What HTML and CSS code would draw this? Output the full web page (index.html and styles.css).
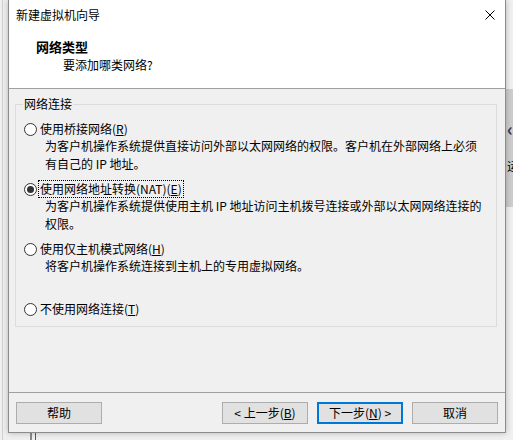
FILE: index.html
```html
<!DOCTYPE html>
<html lang="zh-CN">
<head>
    <meta charset="UTF-8">
    <meta name="viewport" content="width=device-width, initial-scale=1.0">
    <title>新建虚拟机向导</title>
    <link rel="stylesheet" href="styles.css">
</head>
<body>
    <div class="back-line"></div>
    <div class="side-panel"><span class="side-mark">‹</span><span class="side-char">运</span></div>
    <div class="bottom-lines"></div>

    <div class="window">
        <div class="titlebar">
            <span class="title">新建虚拟机向导</span>
            <svg class="close" width="10" height="10" viewBox="0 0 10 10">
                <path d="M0.5 0.5 L9.5 9.5 M9.5 0.5 L0.5 9.5" stroke="#000" stroke-width="1" fill="none"/>
            </svg>
        </div>
        <div class="header">
            <div class="header-title">网络类型</div>
            <div class="header-sub">要添加哪类网络?</div>
        </div>
        <div class="content">
            <fieldset class="group">
                <legend>网络连接</legend>
                <div class="option">
                    <div class="opt-row">
                        <span class="radio"></span>
                        <span class="opt-label">使用桥接网络(<u>R</u>)</span>
                    </div>
                    <div class="opt-desc">为客户机操作系统提供直接访问外部以太网网络的权限。客户机在外部网络上必须<br>有自己的 IP 地址。</div>
                </div>
                <div class="option">
                    <div class="opt-row">
                        <span class="radio checked"></span>
                        <span class="opt-label focused">使用网络地址转换(NAT)(<u>E</u>)</span>
                    </div>
                    <div class="opt-desc">为客户机操作系统提供使用主机 IP 地址访问主机拨号连接或外部以太网网络连接的<br>权限。</div>
                </div>
                <div class="option">
                    <div class="opt-row">
                        <span class="radio"></span>
                        <span class="opt-label">使用仅主机模式网络(<u>H</u>)</span>
                    </div>
                    <div class="opt-desc">将客户机操作系统连接到主机上的专用虚拟网络。</div>
                </div>
                <div class="option last">
                    <div class="opt-row">
                        <span class="radio"></span>
                        <span class="opt-label">不使用网络连接(<u>T</u>)</span>
                    </div>
                </div>
            </fieldset>
        </div>
        <div class="footer">
            <button class="btn">帮助</button>
            <div class="nav-buttons">
                <button class="btn">&lt; 上一步(<u>B</u>)</button>
                <button class="btn btn-default">下一步(<u>N</u>) &gt;</button>
                <button class="btn">取消</button>
            </div>
        </div>
    </div>
</body>
</html>
```

FILE: styles.css
```css
* { box-sizing: border-box; }
body {
    margin: 0;
    width: 513px;
    height: 440px;
    overflow: hidden;
    position: relative;
    background: #f0f0f0;
    font-family: "Noto Sans CJK SC", "Microsoft YaHei", sans-serif;
    font-size: 12px;
    color: #000;
}

/* bits of the desktop behind the dialog */
.back-line {
    position: absolute;
    left: 2px;
    top: 0;
    width: 1px;
    height: 440px;
    background: #d0d0d0;
}
.side-panel {
    position: absolute;
    left: 505px;
    top: 89px;
    width: 8px;
    height: 118px;
    background: #cdcdcd;
    overflow: hidden;
}
.side-mark {
    position: absolute;
    left: 2px;
    top: 30px;
    font-size: 18px;
    font-weight: 700;
    line-height: 18px;
    color: #2f3b4a;
}
.side-char {
    position: absolute;
    left: 2px;
    top: 70px;
    font-size: 12px;
    line-height: 14px;
}
.bottom-lines {
    position: absolute;
    left: 30px;
    top: 433px;
    width: 6px;
    height: 7px;
    border-left: 2px solid #8a8a8a;
    border-right: 1px solid #5a5a5a;
}

.window {
    position: relative;
    margin-left: 8px;
    width: 498px;
    height: 433px;
    display: flex;
    flex-direction: column;
    background: #f0f0f0;
    border: 1px solid #8c8c8c;
    border-top: none;
    box-shadow: 0 0 6px rgba(0,0,0,0.25);
}

.titlebar {
    height: 30px;
    display: flex;
    align-items: center;
    justify-content: space-between;
    padding: 0 10px 0 7px;
    background: #fff;
}
.title { line-height: 18px; }
.close { display: block; }

.header {
    height: 59px;
    padding: 8px 0 0 27px;
    background: #fff;
    border-bottom: 1px solid #a0a0a0;
}
.header-title {
    font-size: 13px;
    font-weight: 700;
    line-height: 18px;
}
.header-sub {
    line-height: 18px;
    padding-left: 27px;
}

.content {
    flex: 1;
    padding: 6px 8px 0 6px;
}
.group {
    margin: 0;
    padding: 0 8px 9px 8px;
    border: 1px solid #dcdcdc;
}
.group legend {
    padding: 0 1px;
    margin-left: -1px;
    line-height: 18px;
}

.option {
    padding-top: 8px;
    min-height: 60px;
}
.option.last { min-height: 0; }
.opt-row {
    display: flex;
    align-items: center;
    height: 16px;
}
.radio {
    width: 13px;
    height: 13px;
    border: 1px solid #333;
    border-radius: 50%;
    background: #fff;
    margin-right: 1px;
    position: relative;
    flex-shrink: 0;
}
.radio.checked::after {
    content: "";
    position: absolute;
    left: 2px;
    top: 2px;
    width: 7px;
    height: 7px;
    border-radius: 50%;
    background: #333;
}
.opt-label {
    line-height: 16px;
    padding: 0 1px;
    border: 1px solid transparent;
}
.opt-label.focused { border: 1px dotted #000; }
.opt-desc {
    padding-left: 21px;
    line-height: 18px;
}

.footer {
    border-top: 1px solid #a0a0a0;
    padding: 9px 7px 8px 7px;
    display: flex;
    justify-content: space-between;
}
.nav-buttons {
    display: flex;
    gap: 9px;
}
.btn {
    width: 86px;
    height: 22px;
    padding: 0;
    background: #e1e1e1;
    border: 1px solid #adadad;
    font-family: inherit;
    font-size: 12px;
    line-height: 18px;
    color: #000;
}
.btn-default { border: 2px solid #0078d7; }
```
